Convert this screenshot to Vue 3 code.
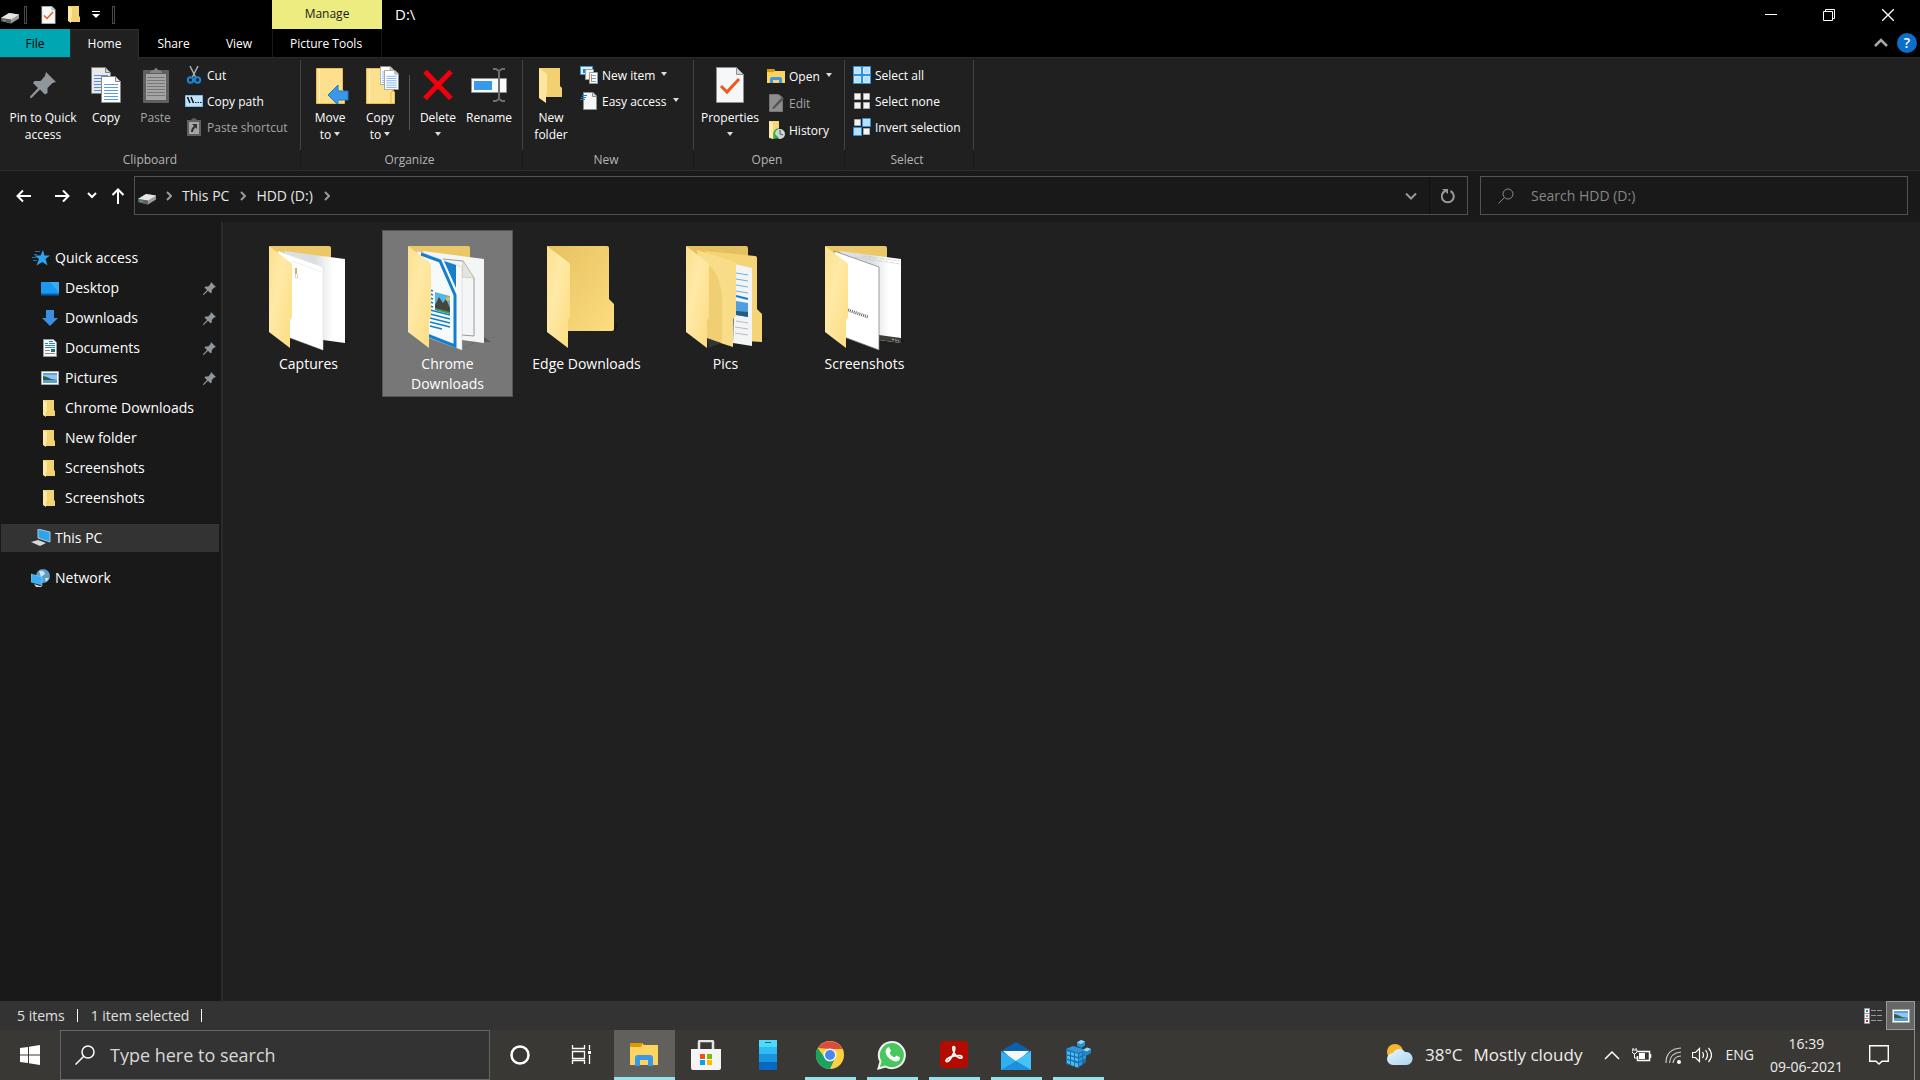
<script setup>
import { ref } from 'vue'

const pinned = [
  { name: 'Desktop', icon: 'i-desktop', pin: true },
  { name: 'Downloads', icon: 'i-down', pin: true },
  { name: 'Documents', icon: 'i-doc', pin: true },
  { name: 'Pictures', icon: 'i-pic', pin: true },
  { name: 'Chrome Downloads', icon: 'i-folder' },
  { name: 'New folder', icon: 'i-folder' },
  { name: 'Screenshots', icon: 'i-folder' },
  { name: 'Screenshots', icon: 'i-folder' },
]

const folders = [
  { name: 'Captures', art: 'f-captures' },
  { name: 'Chrome Downloads', art: 'f-chrome' },
  { name: 'Edge Downloads', art: 'f-edge' },
  { name: 'Pics', art: 'f-pics' },
  { name: 'Screenshots', art: 'f-shots' },
]
const selected = ref('Chrome Downloads')

const apps = [
  { name: 'Cortana', icon: 't-cortana' },
  { name: 'Task View', icon: 't-taskview' },
  { name: 'File Explorer', icon: 't-explorer', open: true, active: true },
  { name: 'Microsoft Store', icon: 't-store' },
  { name: 'Your Phone', icon: 't-phone' },
  { name: 'Chrome', icon: 't-chrome', open: true },
  { name: 'WhatsApp', icon: 't-whatsapp', open: true },
  { name: 'Acrobat Reader', icon: 't-acrobat', open: true },
  { name: 'Mail', icon: 't-mail', open: true },
  { name: 'Registry Editor', icon: 't-regedit', open: true },
]
</script>

<template>
  <div class="screen">
    <svg class="defs" width="0" height="0" aria-hidden="true">
      <defs>
        <linearGradient id="g-flap" x1="0" y1="0" x2="1" y2="1">
          <stop offset="0" stop-color="#fbe08f" /><stop offset=".4" stop-color="#ffe9a6" /><stop offset="1" stop-color="#fcdc80" />
        </linearGradient>
        <linearGradient id="g-back" x1="0" y1="0" x2="1" y2="1">
          <stop offset="0" stop-color="#e6c160" /><stop offset="1" stop-color="#fcdd80" />
        </linearGradient>
        <linearGradient id="g-photo" x1="0" y1="0" x2="0" y2="1">
          <stop offset="0" stop-color="#4f9bea" /><stop offset=".45" stop-color="#b8dcf5" /><stop offset=".55" stop-color="#3f6a5a" /><stop offset="1" stop-color="#2f6fae" />
        </linearGradient>
        <linearGradient id="g-page" x1="0" y1="0" x2="1" y2="0">
          <stop offset="0" stop-color="#dfe3e5" /><stop offset=".5" stop-color="#d9dddf" /><stop offset=".8" stop-color="#ffffff" />
        </linearGradient>
        <linearGradient id="g-cloud" x1="0" y1="0" x2="1" y2="1">
          <stop offset="0" stop-color="#e9f6fd" /><stop offset="1" stop-color="#a9d5f1" />
        </linearGradient>
      </defs>

      <symbol id="i-drive" viewBox="0 0 18 12">
        <path d="M0 6 8 1l10 1.500v4L10 11.500 0 9z" fill="#9b9d9c" /><path d="M0 6 8 1l10 1.500L10 7.500z" fill="#e4e6e5" />
        <path d="M0 6l10 1.500v4L0 9z" fill="#5d625f" /><path d="M2 7.500l3 .5v1l-3-.5z" fill="#4ec25a" />
      </symbol>
      <symbol id="i-check" viewBox="0 0 28 36">
        <path d="M.5.500h20l7 7v28H.500z" fill="#f5f7f8" stroke="#8c9093" /><path d="M20.500.500v7h7z" fill="#d4d7da" stroke="#8c9093" />
        <path d="M5 19l6 6L23 12" fill="none" stroke="#f0561d" stroke-width="3" />
      </symbol>
      <symbol id="i-folder" viewBox="0 0 12 17">
        <path d="M0 0h11v10l1 1v5H2z" fill="#f3d272" /><path d="M0 0l4 2v9l-1 1v5L0 15z" fill="#ffe8a5" />
      </symbol>
      <symbol id="i-bigfolder" viewBox="0 0 24 36">
        <path d="M0 1h21v18l2 2v9H6z" fill="#f3d172" /><path d="M0 1l8 6v19l-1 2v8L0 31z" fill="#ffe6a0" />
      </symbol>
      <symbol id="i-flat" viewBox="0 0 34 38">
        <path d="M.5 2.500h26V24l2 2v11.500H.5z" fill="#fde08d" stroke="#e9bd4f" /><path d="M3.500 3v34" stroke="#fff1c0" /><path d="M25 37V26l3-1" fill="none" stroke="#e6bb50" />
      </symbol>
      <symbol id="i-page" viewBox="0 0 20 27">
        <path d="M.5.500h14l5 5v21H.500z" fill="#fff" stroke="#85898c" /><path d="M14.500.500v5h5z" fill="#dfe2e5" stroke="#85898c" />
        <path d="M3 8.500h14M3 11.500h14M3 14.500h14M3 17.500h14M3 20.500h14M3 23.500h14" stroke="#5b9bef" />
      </symbol>
      <symbol id="i-copy" viewBox="0 0 30 36">
        <use href="#i-page" x="0" y="0" width="20" height="27" opacity=".9" /><use href="#i-page" x="10" y="9" width="20" height="27" />
      </symbol>
      <symbol id="i-pin" viewBox="0 0 26 26">
        <path d="M16 0l10 10-3.500 1-5 5v5l-2.500 1.500-5-5L1.500 26 0 26l.5-2L8 16l-5-5L4.500 9h6L15 4z" fill="#8f979d" />
      </symbol>
      <symbol id="i-paste" viewBox="0 0 26 36">
        <rect x="0" y="3" width="26" height="33" rx="1" fill="#5f5f5f" /><path d="M7 6c0-2 2-3 4-3q2-4 4 0c2 0 4 1 4 3z" fill="#858585" />
        <path d="M3 7h20v26H3z" fill="#a5a5a5" /><path d="M4 10.500h18M4 13.500h18M4 16.500h18M4 19.500h18M4 22.500h18M4 25.500h18M4 28.500h18" stroke="#777" />
      </symbol>
      <symbol id="i-cut" viewBox="0 0 18 18">
        <path d="M5 0l5.500 11M13 0L7.500 11" stroke="#aab0b5" stroke-width="1.500" /><circle cx="5.500" cy="14" r="2.700" fill="none" stroke="#1c86d6" stroke-width="2" /><circle cx="12.500" cy="14" r="2.700" fill="none" stroke="#1c86d6" stroke-width="2" />
      </symbol>
      <symbol id="i-path" viewBox="0 0 18 18">
        <path d="M.5 3.500h17v11H.500z" fill="#bfe4fb" stroke="#7fbce8" /><path d="M2.500 5l2.500 6M6 5l2.500 6" stroke="#111" stroke-width="1.500" /><path d="M10 10.500h1.500M12.500 10.500H14M15 10.500h1.500" stroke="#111" />
      </symbol>
      <symbol id="i-shortcut" viewBox="0 0 18 18">
        <path d="M2 2h4q3-4 6 0h4v16H2z" fill="#5f5f5f" /><path d="M4 4h10v12H4z" fill="#a5a5a5" /><path d="M7 6h5v5l-1.500-1.500Q8 11 8 14H6q0-4 3-6z" fill="#333" />
      </symbol>
      <symbol id="i-move" viewBox="0 0 34 38">
        <use href="#i-flat" x="0" y="0" width="34" height="38" /><path d="M12 29l10-10v6h10v9H22v5z" fill="#3a98e8" stroke="#1f78c8" />
      </symbol>
      <symbol id="i-copyto" viewBox="0 0 34 38">
        <use href="#i-flat" x="0" y="0" width="34" height="38" /><use href="#i-page" x="14" y="0" width="14" height="19" /><use href="#i-page" x="18" y="4" width="15" height="20" />
      </symbol>
      <symbol id="i-delete" viewBox="0 0 30 36"><path d="M2 4.500l26 27M28 4.500L2 31.500" stroke="#f0000f" stroke-width="5" /></symbol>
      <symbol id="i-rename" viewBox="0 0 36 36">
        <path d="M.5 11.500h35v14H.500z" fill="#f6f8f9" stroke="#8c9093" /><path d="M3 14h18v9H3z" fill="#3a98e8" /><path d="M22 2h3l3 2 3-2h3M22 34h3l3-2 3 2h3M28 4v28" fill="none" stroke="#6e6e6e" stroke-width="2" />
      </symbol>
      <symbol id="i-newitem" viewBox="0 0 18 18">
        <path d="M.5.500h12v8H.500z" fill="#d9effc" stroke="#3f97d8" /><path d="M3 3h3v4H3z" fill="#2d8a9e" /><path d="M5.500 3.500h8v10h-8z" fill="#f4f4f4" stroke="#9a9a9a" />
        <path d="M9.500 6.500h8v11h-8z" fill="#fff" stroke="#9a9a9a" /><path d="M11 9.500h5M11 12.500h5M11 15.500h5" stroke="#6da6e0" /><path d="M11.500 8v8" stroke="#e4804c" />
      </symbol>
      <symbol id="i-easy" viewBox="0 0 18 18">
        <path d="M3.500.500H13l3.500 3.500v13.500h-13z" fill="#f4f6f7" stroke="#8c9093" /><path d="M12.500.500v4h4" fill="#d4d7da" stroke="#8c9093" /><path d="M2 3.500h5M1 5.500h5M0 7.500h5" stroke="#1c78c8" />
      </symbol>
      <symbol id="i-open" viewBox="0 0 18 18">
        <path d="M0 2h7l1 2h10v12H0z" fill="#ffd45e" /><path d="M0 2h7l1 2-1 1H0z" fill="#dd9a00" /><path d="M3 16v-4q0-2 2-2h8q2 0 2 2v4h-3v-3H6v3z" fill="#3a98e8" />
      </symbol>
      <symbol id="i-edit" viewBox="0 0 18 18">
        <path d="M2.500.500h9l4 3v14h-13z" fill="#8e8e8e" stroke="#777" /><path d="M5 14L15 3l2 2L7 15z" fill="#555" />
      </symbol>
      <symbol id="i-history" viewBox="0 0 18 18">
        <path d="M2 0h10v12l-5 6-5-1z" fill="#f7d67a" /><path d="M2 0l4 2v16l-4-2z" fill="#ffeab0" /><path d="M12 7a6 6 0 0 0-5 9l3-4z" fill="#32b244" /><circle cx="13" cy="13" r="5" fill="#cfd4d6" /><path d="M13 9v4l3 1" stroke="#555" fill="none" /><path d="M7 12l-1 6 6-1z" fill="#32b244" />
      </symbol>
      <symbol id="i-all" viewBox="0 0 18 18">
        <path d="M0 0h18v18H0z" fill="#2f8fe0" /><path d="M1.500 1.500h6v6h-6zM10.500 1.500h6v6h-6zM1.500 10.500h6v6h-6zM10.500 10.500h6v6h-6z" fill="#b9e0fb" stroke="#d4edfd" />
      </symbol>
      <symbol id="i-none" viewBox="0 0 18 18">
        <path d="M1.500 1.500h6v6h-6zM10.500 1.500h6v6h-6zM1.500 10.500h6v6h-6zM10.500 10.500h6v6h-6z" fill="#f4f4f4" stroke="#aaa" />
      </symbol>
      <symbol id="i-invert" viewBox="0 0 18 18">
        <path d="M1.500 1.500h6v6h-6zM10.500 10.500h6v6h-6z" fill="#f4f4f4" stroke="#aaa" /><path d="M9.500.500h8v8h-8zM.5 9.500h8v8h-8z" fill="#b9e0fb" stroke="#2f8fe0" />
      </symbol>
      <symbol id="i-star" viewBox="0 0 18 18">
        <path d="M11 1l1.500 5.500H18l-4.500 3.500 2 6.500-5-3.500-6 3.500L7 10 2.500 6.500H8.500z" fill="#2ea3ee" /><path d="M3 2.500h5M0 8.500h4M1 11.500h4M2 5.500h3" stroke="#1c6fb0" />
      </symbol>
      <symbol id="i-desktop" viewBox="0 0 18 18"><path d="M0 3h18v12H0z" fill="#1b98f0" /><path d="M0 15.500h18" stroke="#0a5fa8" stroke-width="2" /><path d="M9 3h9v11z" fill="#3aaaf5" /></symbol>
      <symbol id="i-down" viewBox="0 0 18 18"><path d="M5 1h8v8h4l-8 8-8-8h4z" fill="#3a90e0" /></symbol>
      <symbol id="i-doc" viewBox="0 0 18 18">
        <path d="M2.500.500h10l3 3v14h-13z" fill="#f8f8f8" stroke="#999" /><path d="M4 4.500h3M8 2.500h4M8 4.500h6M4 6.500h10M4 8.500h10" stroke="#2b86d0" /><path d="M4 11.500h5M4 14.500h10" stroke="#888" /><path d="M10 10h4v3h-4z" fill="#1f6f8a" />
      </symbol>
      <symbol id="i-pic" viewBox="0 0 18 18"><path d="M.5 2.500h17v13H.500z" fill="#fff" stroke="#aaa" /><path d="M2 4h14v10H2z" fill="#8fc4f4" /><path d="M2 4h14v2H2z" fill="#5b9ff0" /><path d="M2 7l4 1 4 2 6 1v1H2z" fill="#2e5f4c" /><path d="M2 11h14v3H2z" fill="#5d9fc0" /></symbol>
      <symbol id="i-pc" viewBox="0 0 20 18"><path d="M7 0l12 3v10L7 9z" fill="#2aa5ee" stroke="#b8c4cc" /><path d="M0 13l7-2 8 3-6 3z" fill="#d5d8da" /></symbol>
      <symbol id="i-net" viewBox="0 0 20 18"><circle cx="12" cy="7" r="7" fill="#5b9cc8" /><path d="M8 2q5-1 6 3l-4 3zM14 9l4 0-3 4z" fill="#cfe3ef" /><path d="M0 5l11 3v8L0 13z" fill="#35aef2" stroke="#a8d9f5" stroke-width=".5" /><path d="M3 15l6 2 3-1-2 2H5z" fill="#d5d8da" /></symbol>

      <symbol id="f-back" viewBox="0 0 86 106"><path d="M1 1h60q2 0 2 2v51l5 5v25q0 2-2 2H20z" fill="url(#g-back)" /></symbol>
      <symbol id="f-flap" viewBox="0 0 86 106"><path d="M1 1l21 16q2 1 2 3v52l-2 3v28L1 87z" fill="url(#g-flap)" /></symbol>
      <symbol id="f-edge" viewBox="0 0 86 106"><path d="M68 78h4l-2 8h-2z" fill="#111" opacity=".5" /><use href="#f-back" width="86" height="106" /><use href="#f-flap" width="86" height="106" /></symbol>
      <symbol id="f-captures" viewBox="0 0 86 106">
        <path d="M55 104l14-7h13l-6-4z" fill="#111" opacity=".5" /><path d="M1 1h60q2 0 2 2v40H20z" fill="#ecc765" />
        <path d="M16 6l61 8v84l-22-3z" fill="url(#g-page)" /><path d="M10 6l45 16v83L20 92z" fill="#fff" stroke="#d8dadb" stroke-width=".5" />
        <path d="M27 23h2v6h-2z" fill="#d9ae52" /><path d="M27.500 29v4h2v-4" fill="none" stroke="#aaa" stroke-width=".5" /><path d="M24 16l30 11" stroke="#ddd" stroke-width=".5" /><use href="#f-flap" width="86" height="106" />
      </symbol>
      <symbol id="f-chrome" viewBox="0 0 86 106">
        <path d="M55 104l14-7h15l-7-5z" fill="#444" opacity=".6" /><path d="M1 1h60q2 0 2 2v40H20z" fill="#ecc765" />
        <path d="M16 6l61 8v84l-22-3z" fill="#f3f5f6" /><path d="M36 14l20 2 11 17v58l-12-1" fill="none" stroke="#999" /><path d="M56 16l11 17-12-1z" fill="#e2e5e6" stroke="#c9b65f" stroke-width=".5" />
        <path d="M10 6l45 16v83L20 92z" fill="#f7f9fa" stroke="#c8cbcd" stroke-width=".5" />
        <path d="M14 9l19 7 15 34v51L20 90" fill="none" stroke="#1480cc" stroke-width="3" /><path d="M37 16l12 4v23z" fill="#1480cc" />
        <path d="M23 45l3 1M23 49l3 1M23 53l3 1M23 57l3 1M23 61l3 1M23 65l20 5M23 69l20 5M23 73l20 5M23 77l20 5M23 81l12 3" stroke="#1480cc" stroke-width="1.500" />
        <path d="M28 47l15 4v18l-15-4z" fill="#59b5e8" /><path d="M28 60l4-8 4 6 3-4 4 9v5l-15-4z" fill="#46463f" /><path d="M28 63l15 4v2l-15-4z" fill="#3e9c4a" /><circle cx="41" cy="54" r="2" fill="#f5b927" />
        <use href="#f-flap" width="86" height="106" />
      </symbol>
      <symbol id="f-pics" viewBox="0 0 86 106">
        <path d="M48 101l24-6h12l-7-4z" fill="#111" opacity=".5" /><path d="M1 1h60q2 0 2 2v40H20z" fill="#e4c05f" />
        <path d="M20 6l50 5q2 0 2 2v51l5 5v28l-16-1z" fill="#f5d476" /><path d="M50 19l17 4v78l-19-3z" fill="#f2f4f5" />
        <path d="M51 28l12 2M51 34l12 2M51 40l12 2M51 46l12 2" stroke="#6ab2e0" /><path d="M51 51l12 3" stroke="#1480cc" stroke-width="2" /><path d="M51 56l12 2v14l-12-2z" fill="#4f9fdc" /><path d="M51 66l12 1v5l-12-2z" fill="#235f80" /><path d="M51 76l12 2M50 82l13 2M50 88l13 2" stroke="#bbb" />
        <path d="M12 5l38 12q1 0 1 2v52l-3 3v28L20 93z" fill="#f9dc88" /><path d="M24 20q14 14 13 40v38l-15-5V20z" fill="#f0cf74" /><path d="M22 93l14 5-12 5z" fill="#333" />
        <use href="#f-flap" width="86" height="106" />
      </symbol>
      <symbol id="f-shots" viewBox="0 0 86 106">
        <path d="M55 104l14-7h13l-6-4z" fill="#111" opacity=".5" /><path d="M1 1h60q2 0 2 2v40H20z" fill="#ecc765" />
        <path d="M16 6l61 8v84l-22-3z" fill="url(#g-page)" /><path d="M30 12l46 7M38 11l38 5" stroke="#bbb" stroke-width=".5" stroke-dasharray="5 1" /><path d="M55 90l22 3v5l-22-3z" fill="#3d3d38" /><path d="M68 94l7 2" stroke="#bbb" stroke-dasharray="2 1" />
        <path d="M10 6l45 16v83L20 92z" fill="#fff" stroke="#777" stroke-width=".7" /><path d="M24 65l20 7" stroke="#666" stroke-width="3" stroke-dasharray="1 1" />
        <use href="#f-flap" width="86" height="106" />
      </symbol>

      <symbol id="t-cortana" viewBox="0 0 30 30"><circle cx="15" cy="15" r="8.500" fill="none" stroke="#fff" stroke-width="2.500" /></symbol>
      <symbol id="t-taskview" viewBox="0 0 30 30"><path d="M5.500 5v3.500h12V5M5.500 24v-3.500h12V24M5.500 11.500h12v7h-12zM22.500 5v5M22.500 15v9" fill="none" stroke="#fff" stroke-width="1.300" /><path d="M21 11h3v3h-3z" fill="#fff" /></symbol>
      <symbol id="t-explorer" viewBox="0 0 30 30"><path d="M1 3h12l2 2h14v20H1z" fill="#ffd45e" /><path d="M1 3h12v3l-2 1H1z" fill="#dd9a00" /><path d="M6 26V18q0-3 3-3h12q3 0 3 3v8h-5v-6h-8v6z" fill="#3a98e8" /></symbol>
      <symbol id="t-store" viewBox="0 0 30 30"><path d="M8 9V2q0-1 1-1h12q1 0 1 1v7" fill="none" stroke="#e5e5e5" stroke-width="2.500" /><path d="M0 9h30v19q0 2-2 2H2q-2 0-2-2z" fill="#f4f4f4" /><path d="M9 14h5v5H9z" fill="#f25022" /><path d="M16 14h5v5h-5z" fill="#7fba00" /><path d="M9 20h5v5H9z" fill="#00a4ef" /><path d="M16 20h5v5h-5z" fill="#ffb900" /></symbol>
      <symbol id="t-phone" viewBox="0 0 30 30"><path d="M6 0h18v30H6z" fill="#50d9ff" /><path d="M6 7h18v23H6z" fill="#2fbcf2" /><path d="M6 14h18v16H6z" fill="#1a94e0" /><path d="M6 22h18v8H6z" fill="#0a68c2" /><path d="M12 2.500h6" stroke="#0a68a8" /></symbol>
      <symbol id="t-chrome" viewBox="0 0 30 30"><circle cx="15" cy="15" r="14" fill="#fdd13e" /><path d="M3 8a14 14 0 0 1 24 0l0 1H15z" fill="#dc4b3e" /><path d="M2.800 8A14 14 0 0 0 15 29l5-11-10 0z" fill="#1aa260" /><circle cx="15" cy="15" r="6.500" fill="#f3f3f3" /><circle cx="15" cy="15" r="5" fill="#4a86ee" /></symbol>
      <symbol id="t-whatsapp" viewBox="0 0 30 30"><path d="M1.500 28.500l2-7a13 13 0 1 1 5 5z" fill="#48c85c" stroke="#f2f2f2" stroke-width="2" /><path d="M10 8l2-1 2 4-1.500 2q2 3.500 5 4.500l2-2 3.500 2q0 4-4.500 4-8-2-10-9 0-3 1.500-4.500z" fill="#fff" /></symbol>
      <symbol id="t-acrobat" viewBox="0 0 30 30"><rect x="1" y="1" width="28" height="27" rx="4" fill="#b30b00" /><path d="M14.500 6.500c2 0 1.500 4-.5 8-2 4-4.500 7.500-6.500 7-2-1 2-4.500 7.500-5.500 5-1 8.500-.5 8 1.500-.5 1.500-4 .5-6.500-2.500-2.500-3-3.500-8.500-2-8.500z" fill="none" stroke="#fff" stroke-width="1.700" /></symbol>
      <symbol id="t-mail" viewBox="0 0 30 30"><path d="M0 11L15 2l15 9v10H0z" fill="#0b61ac" /><path d="M2 11h26L15 23z" fill="#f4f6f8" /><path d="M0 11l15 10 15-10v19H0z" fill="#2fb0f2" /><path d="M15 21l15-10v19z" fill="#45c2f9" /><path d="M0 30l15-9 15 9z" fill="#1d8fdc" /></symbol>
      <symbol id="t-regedit" viewBox="0 0 30 30">
        <path d="M3 9l7-3 13 4v12l-8 6-12-4z" fill="#1b6fb0" /><path d="M3 9l7-3 13 4-8 3z" fill="#2f94d4" />
        <path d="M4 11l3 1v3l-3-1zM8 12l3 1v3l-3-1zM12 13l3 1v3l-3-1zM4 15.500l3 1v3l-3-1zM8 16.500l3 1v3l-3-1zM12 17.500l3 1v3l-3-1zM4 20l3 1v3l-3-1zM8 21l3 1v4l-3-1zM12 22.500l3 1v4l-3-1z" fill="#49bdf2" />
        <path d="M16 14l3-1.500v3L16 17zM20 12l3-1.500v3L20 15zM16 18.500l3-1.500v3l-3 1.500zM20 16.500l3-1.500v3L20 19.500zM16 23l3-1.500v3L16 26z" fill="#2d9ad8" />
        <path d="M14 2.500L18 0l4 1.500v4L18 8l-4-2z" fill="#2b90ce" /><path d="M14 2.500L18 0l4 1.500-4 2.500z" fill="#8bdcfa" />
        <path d="M20 10l4-2.500 4 1.500v4l-4 2.500-4-2z" fill="#2484c4" /><path d="M20 10l4-2.500 4 1.500-4 2.500z" fill="#8bdcfa" />
      </symbol>
    </svg>

    <header class="titlebar">
      <div class="quick">
        <svg width="18" height="12" class="drive"><use href="#i-drive" /></svg>
        <i class="bar"></i>
        <button aria-label="Properties"><svg width="15" height="18"><use href="#i-check" /></svg></button>
        <button aria-label="New folder"><svg width="12" height="17"><use href="#i-folder" /></svg></button>
        <button aria-label="Customize"><svg width="8" height="8"><path d="M0 .5h8" stroke="#fff" /><path d="M0 3h8L4 7z" fill="#fff" /></svg></button>
        <i class="bar"></i>
      </div>
      <div class="manage">Manage</div>
      <h1>D:\</h1>
      <div class="wincontrols">
        <button aria-label="Minimize"><svg width="12" height="12"><path d="M0 5.500h12" stroke="#fff" /></svg></button>
        <button aria-label="Restore"><svg width="12" height="12"><path d="M.5 2.500h9v9h-9zM2.500 2.500v-2h9v9h-2" fill="none" stroke="#fff" /></svg></button>
        <button aria-label="Close"><svg width="12" height="12"><path d="M0 0l12 12M12 0L0 12" stroke="#fff" stroke-width="1.300" /></svg></button>
      </div>
    </header>

    <nav class="tabs">
      <button class="file">File</button>
      <button class="tab home">Home</button>
      <button class="tab">Share</button>
      <button class="tab view">View</button>
      <button class="tab tools">Picture Tools</button>
      <div class="tabs-end">
        <button aria-label="Collapse ribbon"><svg width="14" height="10"><path d="M1 8l6-6 6 6" fill="none" stroke="#aaa" stroke-width="2.500" /></svg></button>
        <button class="help" aria-label="Help">?</button>
      </div>
    </nav>

    <section class="ribbon">
      <div class="group clipboard">
        <div class="tools-row">
          <button class="big"><svg width="26" height="26"><use href="#i-pin" /></svg><span>Pin to Quick<br />access</span></button>
          <button class="big"><svg width="30" height="36"><use href="#i-copy" /></svg><span>Copy</span></button>
          <button class="big dim"><svg width="26" height="36"><use href="#i-paste" /></svg><span>Paste</span></button>
          <div class="smalls">
            <button><svg><use href="#i-cut" /></svg>Cut</button>
            <button><svg><use href="#i-path" /></svg>Copy path</button>
            <button class="dim"><svg><use href="#i-shortcut" /></svg>Paste shortcut</button>
          </div>
        </div>
        <h2>Clipboard</h2>
      </div>
      <div class="group organize">
        <div class="tools-row">
          <button class="big to"><svg width="34" height="38"><use href="#i-move" /></svg><span>Move<br />to <i class="caret"></i></span></button>
          <button class="big to"><svg width="34" height="38"><use href="#i-copyto" /></svg><span>Copy<br />to <i class="caret"></i></span></button>
          <i class="split"></i>
          <button class="big"><svg width="30" height="36"><use href="#i-delete" /></svg><span>Delete<br /><i class="caret"></i></span></button>
          <button class="big"><svg width="36" height="36"><use href="#i-rename" /></svg><span>Rename</span></button>
        </div>
        <h2>Organize</h2>
      </div>
      <div class="group new">
        <div class="tools-row">
          <button class="big"><svg width="24" height="36"><use href="#i-bigfolder" /></svg><span>New<br />folder</span></button>
          <div class="smalls">
            <button><svg><use href="#i-newitem" /></svg>New item<i class="caret"></i></button>
            <button><svg><use href="#i-easy" /></svg>Easy access<i class="caret"></i></button>
          </div>
        </div>
        <h2>New</h2>
      </div>
      <div class="group open">
        <div class="tools-row">
          <button class="big"><svg width="28" height="36"><use href="#i-check" /></svg><span>Properties<br /><i class="caret"></i></span></button>
          <div class="smalls loose">
            <button><svg><use href="#i-open" /></svg>Open<i class="caret"></i></button>
            <button class="dim"><svg><use href="#i-edit" /></svg>Edit</button>
            <button><svg><use href="#i-history" /></svg>History</button>
          </div>
        </div>
        <h2>Open</h2>
      </div>
      <div class="group select">
        <div class="tools-row">
          <div class="smalls">
            <button><svg><use href="#i-all" /></svg>Select all</button>
            <button><svg><use href="#i-none" /></svg>Select none</button>
            <button><svg><use href="#i-invert" /></svg>Invert selection</button>
          </div>
        </div>
        <h2>Select</h2>
      </div>
    </section>

    <div class="address">
      <div class="arrows">
        <button aria-label="Back"><svg width="16" height="14"><path d="M15 7H1M7 1.500L1.500 7 7 12.500" fill="none" stroke="#fff" stroke-width="2" /></svg></button>
        <button aria-label="Forward"><svg width="16" height="14"><path d="M1 7h14M9 1.500L14.500 7 9 12.500" fill="none" stroke="#fff" stroke-width="2" /></svg></button>
        <button aria-label="Recent"><svg width="10" height="7"><path d="M1 1l4 4 4-4" fill="none" stroke="#fff" stroke-width="2" /></svg></button>
        <button aria-label="Up"><svg width="14" height="16"><path d="M7 16V2M1.500 7L7 1.500 12.500 7" fill="none" stroke="#fff" stroke-width="2" /></svg></button>
      </div>
      <div class="crumbs">
        <svg width="18" height="12" class="drive"><use href="#i-drive" /></svg>
        <svg class="chev" width="6" height="10"><path d="M1 1l4 4-4 4" /></svg>
        <a href="#pc">This PC</a>
        <svg class="chev" width="6" height="10"><path d="M1 1l4 4-4 4" /></svg>
        <a href="#d">HDD (D:)</a>
        <svg class="chev" width="6" height="10"><path d="M1 1l4 4-4 4" /></svg>
        <button class="history" aria-label="Previous locations"><svg width="12" height="8"><path d="M1 1.500l5 5 5-5" fill="none" stroke="#999" stroke-width="2" /></svg></button>
        <button class="refresh" aria-label="Refresh"><svg width="15" height="16"><path d="M9.500 3a6 6 0 1 1-5.500 0" fill="none" stroke="#999" stroke-width="2" /><path d="M1 1h6v5z" fill="#999" /></svg></button>
      </div>
      <label class="find">
        <svg width="16" height="16"><circle cx="10" cy="6" r="5" fill="none" stroke="#888" /><path d="M6.500 9.500L.5 15.500" stroke="#888" /></svg>
        <input type="text" placeholder="Search HDD (D:)" aria-label="Search HDD (D:)" />
      </label>
    </div>

    <div class="body">
      <aside class="side">
        <a class="row root" href="#quick"><svg width="18" height="18"><use href="#i-star" /></svg>Quick access</a>
        <a v-for="(p, n) in pinned" :key="n" class="row" href="#folder">
          <svg width="18" height="18" v-if="p.icon !== 'i-folder'"><use :href="'#' + p.icon" /></svg>
          <svg v-else class="small-folder" width="12" height="17"><use href="#i-folder" /></svg>
          <span>{{ p.name }}</span>
          <svg v-if="p.pin" class="pin" width="13" height="13"><use href="#i-pin" /></svg>
        </a>
        <a class="row root top current" href="#pc"><svg width="20" height="18"><use href="#i-pc" /></svg>This PC</a>
        <a class="row root top" href="#net"><svg width="20" height="18"><use href="#i-net" /></svg>Network</a>
      </aside>
      <main class="files">
        <button v-for="f in folders" :key="f.name" class="item" :class="{ on: f.name === selected }" @click="selected = f.name">
          <svg width="86" height="106"><use :href="'#' + f.art" /></svg>
          <span>{{ f.name }}</span>
        </button>
      </main>
    </div>

    <footer class="status">
      <span>5 items</span><i></i><span>1 item selected</span><i></i>
      <div class="views">
        <button aria-label="Details"><svg width="18" height="16"><path d="M.5.500h5v5h-5zM.5 5.500h5v5h-5zM.5 10.500h5v5h-5z" fill="#fff" stroke="#999" /><path d="M2 2h2v2H2z" fill="#3a7ab8" /><path d="M2 7h2v2H2z" fill="#a87ab8" /><path d="M2 12h2v2H2z" fill="#c03030" /><path d="M7 2.500h5M13 2.500h5M7 7.500h5M13 7.500h5M7 12.500h5M13 12.500h5" stroke="#999" /></svg></button>
        <button class="on" aria-label="Large icons"><svg width="18" height="18"><use href="#i-pic" /></svg></button>
      </div>
    </footer>

    <div class="taskbar">
      <button class="start" aria-label="Start"><svg width="20" height="20"><path d="M0 3l8-1v7.500H0zM9 1.800L20 0v9.500H9zM0 10.500h8V18l-8-1zM9 10.500h11V20L9 18.200z" fill="#fff" /></svg></button>
      <label class="type">
        <svg width="20" height="20"><circle cx="13" cy="7" r="6" fill="none" stroke="#fff" stroke-width="1.500" /><path d="M8.500 11.500L.5 19.500" stroke="#fff" stroke-width="1.500" /></svg>
        <input type="text" placeholder="Type here to search" aria-label="Type here to search" />
      </label>
      <div class="apps">
        <button v-for="a in apps" :key="a.name" :class="{ open: a.open, active: a.active }" :aria-label="a.name">
          <svg width="30" height="30"><use :href="'#' + a.icon" /></svg>
        </button>
      </div>
      <div class="tray">
        <svg width="26" height="22"><circle cx="8" cy="8" r="8" fill="#f8b62c" /><path d="M6 21a6 6 0 0 1 0-12 7 7 0 0 1 12-1 6.500 6.500 0 0 1 2 13z" fill="url(#g-cloud)" /></svg>
        <span class="temp">38°C</span>
        <span class="sky">Mostly cloudy</span>
        <svg class="up" width="16" height="10"><path d="M1 9l7-7 7 7" fill="none" stroke="#fff" stroke-width="1.500" /></svg>
        <svg class="battery" width="20" height="16"><path d="M5.500 4.500h12v9h-12V9M18.500 7v4" fill="none" stroke="#fff" stroke-width="1.500" /><path d="M7 6h6v6H7z" fill="#fff" /><path d="M1 1v2M4 1v2M0 3h5v2L3 7H2L0 5zM2.500 7v4H5" fill="none" stroke="#fff" /></svg>
        <svg class="wifi" width="17" height="17"><path d="M1 16Q1 2 16 1M4.500 16Q5 6 16 5M8 16q1-7 8-7" fill="none" stroke="#ccc" stroke-width="1.200" /><circle cx="14" cy="15" r="2" fill="#fff" /></svg>
        <svg class="volume" width="20" height="16"><path d="M.5 5.500h3l4-4v13l-4-4h-3zM10.500 5q2 3 0 6M13.500 3q4 5 0 10M16.500 1q6 7 0 14" fill="none" stroke="#fff" stroke-width="1.200" /></svg>
        <span class="lang">ENG</span>
        <time class="clock">16:39<br />09-06-2021</time>
        <button class="notes" aria-label="Notifications"><svg width="20" height="20"><path d="M.7.700h18.600v15.600H13L10 19l-3-2.700H.7z" fill="none" stroke="#fff" stroke-width="1.400" /></svg></button>
        <button class="peek" aria-label="Show desktop"></button>
      </div>
    </div>
  </div>
</template>

<style>
body { margin: 0; background: #191919; }
</style>

<style scoped>
.screen {
  display: flex;
  flex-direction: column;
  min-height: 100vh;
  color: #fff;
  background: #191919;
  font-family: "Open Sans", "Noto Sans", sans-serif;
  font-size: 14px;
  line-height: 20px;
}
.screen * { box-sizing: border-box; }
.defs { position: absolute; }
svg { flex: none; display: block; }
button {
  border: 0;
  padding: 0;
  margin: 0;
  background: none;
  color: inherit;
  font: inherit;
  flex: none;
}
a { color: inherit; text-decoration: none; }
input {
  flex: 1;
  min-width: 0;
  border: 0;
  padding: 0;
  outline: 0;
  background: none;
  color: inherit;
  font: inherit;
}

.titlebar { display: flex; height: 29px; background: #000; }
.quick { display: flex; align-items: center; width: 272px; padding-left: 1px; }
.quick button { display: flex; margin-right: 12px; }
.drive { margin-top: 6px; }
.bar { width: 3px; height: 18px; margin: 0 14px 0 5px; border: 1px solid #4a4a4a; }
.quick .bar:last-child { margin: 0; }
.manage { width: 110px; color: #1a1a1a; background: #ecec80; font-size: 12px; line-height: 28px; text-align: center; }
h1 { margin: 0 0 0 13px; font-size: 15px; font-weight: 400; line-height: 29px; }
.wincontrols { display: flex; margin-left: auto; }
.wincontrols button { display: grid; place-items: center; width: 58px; }
.wincontrols button:last-child { width: 62px; padding-right: 2px; }

.tabs { display: flex; height: 28px; background: #000; font-size: 12px; }
.file { width: 70px; padding-top: 1px; color: #000; background: #00a6b1; }
.tab { width: 69px; padding-top: 1px; }
.tab.home { height: 30px; margin-bottom: -2px; padding: 0 0 2px; background: #202020; border: 1px solid #2d2d2d; border-bottom: 0; position: relative; }
.tab.view { width: 64px; padding-right: 2px; }
.tab.tools { width: 110px; padding-right: 2px; border: solid #181818; border-width: 0 1px; }
.tabs-end { display: flex; align-items: center; gap: 9px; margin-left: auto; padding-right: 3px; }
.help { width: 20px; height: 20px; border-radius: 50%; background: #0b6fcb; font-size: 14px; font-weight: 600; line-height: 20px; }

.ribbon { display: flex; height: 114px; background: #202020; border: solid #2b2b2b; border-width: 1px 0; font-size: 12px; line-height: 17px; }
.group { display: flex; flex-direction: column; border-right: 1px solid #191919; padding-top: 2px; }
.tools-row { display: grid; height: 90px; margin-right: -1px; border-right: 1px solid #444; }
.clipboard { width: 301px; }
.clipboard .tools-row { grid-template-columns: 84px 42px 57px 1fr; padding-left: 1px; }
.organize { width: 222px; }
.organize .tools-row { grid-template-columns: 50px 50px 8px 50px 52px; padding-left: 4px; }
.new { width: 171px; }
.new .tools-row { grid-template-columns: 56px 1fr; }
.open { width: 151px; }
.open .tools-row { grid-template-columns: 72px 1fr; }
.select { width: 129px; }
.select .tools-row { padding-left: 7px; }
h2 { margin: 0; padding-right: 4px; color: #b5b5b5; font-size: 12px; font-weight: 400; line-height: 20px; text-align: center; }
.clipboard h2 { padding: 0; }
.big { display: grid; grid-template-rows: 42px 34px; row-gap: 3px; justify-items: center; align-items: center; align-content: start; padding-top: 4px; text-align: center; white-space: nowrap; }
.big span { align-self: start; }
.big.to svg { margin-left: 6px; }
.dim { color: #a5a5a5; }
.caret { display: inline-block; border: solid transparent; border-width: 4px 3px 0; border-top-color: #ddd; vertical-align: 3px; }
.split { width: 1px; height: 55px; margin: 15px auto 0; background: #555; }
.smalls { display: flex; flex-direction: column; gap: 8px; padding: 6px 0 0 1px; }
.smalls button { display: flex; align-items: center; gap: 4px; height: 18px; text-align: left; white-space: nowrap; }
.smalls svg { width: 18px; height: 18px; }
.smalls .caret { margin: -2px 0 0 2px; }
.smalls.loose { gap: 9px; padding-top: 7px; }

.address { display: flex; height: 51px; padding: 5px 12px 7px 0; }
.address > * { height: 39px; }
.arrows { display: flex; align-items: center; width: 134px; padding-left: 16px; }
.arrows button { display: flex; }
.arrows button:nth-child(2) { margin-left: 22px; }
.arrows button:nth-child(3) { margin-left: 17px; }
.arrows button:nth-child(4) { margin-left: 14px; }
.crumbs { display: flex; flex: 1; align-items: center; padding-left: 3px; border: 1px solid #535353; color: #e8e8e8; }
.crumbs a { margin: 0 11px 0 10px; }
.chev { fill: none; stroke: #999; stroke-width: 2px; }
.crumbs .drive { margin-right: 10px; }
.history, .refresh { display: grid; place-items: center; align-self: stretch; width: 38px; }
.history { width: 36px; margin-left: auto; }
.refresh { border-left: 1px solid #101010; }
.find { display: flex; align-items: center; width: 428px; margin-left: 12px; padding-left: 17px; gap: 17px; border: 1px solid #535353; }
.find input::placeholder { color: #868686; opacity: 1; }

.body { display: flex; flex: 1; }
.side { display: flex; flex-direction: column; width: 221px; padding: 22px 2px 0 1px; }
.row { display: flex; align-items: center; height: 28px; margin-bottom: 2px; padding: 0 3px 0 40px; gap: 6px; }
.row.root { padding-left: 31px; gap: 5px; }
.row.root.top { padding-left: 30px; margin-top: 10px; gap: 4px; }
.row.current { background: #333; }
.small-folder { margin: 0 4px 0 2px; }
.pin { margin-left: auto; }
.files { display: flex; flex: 1; align-items: flex-start; gap: 8px; padding: 8px 0 0 20px; border-left: 2px solid #2b2b2b; background: #202020; }
.item { display: flex; flex-direction: column; align-items: center; width: 131px; min-height: 167px; padding: 14px 4px 0; border: 1px solid transparent; }
.item svg { margin-left: 4px; }
.item span { margin-top: 3px; }
.item.on { background: #777; border-color: #555; }

.status { display: flex; align-items: center; height: 29px; padding: 0 5px 0 17px; background: #333; color: #e0e0e0; }
.status i { width: 1px; height: 13px; margin: 0 13px 0 12px; background: #fff; }
.views { display: flex; align-self: stretch; margin-left: auto; gap: 4px; }
.views button { display: grid; place-items: center; width: 19px; }
.views .on { width: 29px; border: 1px solid #999; background: #666; }

.taskbar { display: flex; height: 50px; background: #3a3834; }
.start { display: grid; place-items: center; width: 60px; }
.type { display: flex; align-items: center; width: 430px; padding-left: 14px; gap: 15px; background: #333; border: 1px solid #666; font-size: 18px; }
.type input { color: #d8d8d8; }
.type input::placeholder { color: #d8d8d8; opacity: 1; }
.apps { display: flex; gap: 1px; }
.apps button { display: grid; place-items: center; width: 61px; border-bottom: 3px solid transparent; padding: 3px 2px 0 0; }
.apps .open { width: 51px; margin: 0 5px; border-color: #8fe4ee; }
.apps .active { width: 61px; margin: 0; background: #62605d; }
.tray { display: flex; align-items: center; margin-left: auto; color: #eee; white-space: nowrap; }
.temp { margin-left: 12px; font-size: 17px; }
.sky { margin-left: 11px; font-size: 17px; }
.up { margin-left: 22px; }
.battery { margin-left: 12px; }
.wifi { margin-left: 13px; }
.volume { margin-left: 10px; }
.lang { margin-left: 13px; }
.clock { margin-left: 16px; line-height: 23px; text-align: center; }
.notes { margin: 0 25px 0 26px; }
.peek { width: 6px; height: 50px; border-left: 1px solid #888; }
</style>
